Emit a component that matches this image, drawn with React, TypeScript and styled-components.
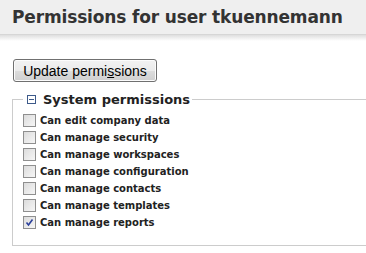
import React from "react";
import styled, { createGlobalStyle } from "styled-components";

const Global = createGlobalStyle`
  html, body { margin: 0; padding: 0; background: #ffffff; overflow: hidden; }
  body { font-family: "DejaVu Sans", Verdana, sans-serif; }
`;

const Page = styled.div`
  width: 366px;
  height: 253px;
  overflow: hidden;
`;

const Header = styled.div`
  height: 34px;
  background: #efefef;
  padding: 0 0 0 12px;
  display: flex;
  align-items: center;
  box-shadow: 0 1px 0 #d6d6d6;
  position: relative;
`;

const Shade = styled.div`
  height: 7px;
  background: linear-gradient(#d9d9d9, #ffffff);
`;

const Title = styled.h1`
  margin: 0;
  font-family: "DejaVu Sans", Verdana, sans-serif;
  font-weight: bold;
  font-size: 17px;
  color: #333333;
  letter-spacing: -0.15px;
`;

const Body = styled.div`
  padding: 18px 0 0 13px;
`;

const Button = styled.button`
  height: 23px;
  width: 144px;
  padding: 0 6px;
  font-family: "Liberation Sans", Arial, sans-serif;
  font-size: 14px;
  color: #000;
  border: 1px solid #707070;
  border-radius: 3px;
  background: linear-gradient(#f2f2f2 0%, #ebebeb 50%, #dddddd 51%, #cfcfcf 100%);
  box-shadow: inset 0 0 0 1px #fcfcfc;
  display: flex;
  align-items: center;
  justify-content: center;
  u { text-decoration: underline; }
`;

const Fieldset = styled.fieldset`
  margin: 10px 0 0 -1px;
  padding: 5px 0 14px 11px;
  border: none;
  border-top: 1px solid #cccccc;
  border-left: 1px solid #cccccc;
  border-bottom: 1px solid #cccccc;
  width: 400px;
`;

const Legend = styled.legend`
  padding: 0 2px 0 4px;
  margin-left: -1px;
  display: flex;
  align-items: center;
  gap: 7px;
  font-family: "DejaVu Sans", Verdana, sans-serif;
  font-weight: bold;
  font-size: 13px;
  color: #222;
`;

const Row = styled.label`
  display: flex;
  align-items: center;
  height: 17px;
  gap: 4px;
  font-family: "DejaVu Sans", Verdana, sans-serif;
  font-weight: bold;
  font-size: 10px;
  color: #222;
`;

const Box = styled.span<{ $checked?: boolean }>`
  width: 11px;
  height: 11px;
  margin-left: -1px;
  border: 1px solid #8f8f8f;
  background: linear-gradient(135deg, #dcdcdc, #f6f6f6);
  display: flex;
  align-items: center;
  justify-content: center;
  flex: none;
`;

const Collapse = () => (
  <svg width="9" height="9" viewBox="0 0 9 9">
    <rect x="0.5" y="0.5" width="8" height="8" fill="#fff" stroke="#3d5a8a" />
    <rect x="2" y="4" width="5" height="1" fill="#3d5a8a" />
  </svg>
);

const Check = () => (
  <svg width="9" height="9" viewBox="0 0 9 9">
    <path d="M1.5 4.5 L3.5 7 L7.5 1.5" fill="none" stroke="#2a3f9a" strokeWidth="1.6" />
  </svg>
);

const items: { label: string; checked?: boolean }[] = [
  { label: "Can edit company data" },
  { label: "Can manage security" },
  { label: "Can manage workspaces" },
  { label: "Can manage configuration" },
  { label: "Can manage contacts" },
  { label: "Can manage templates" },
  { label: "Can manage reports", checked: true },
];

export default function App() {
  return (
    <Page>
      <Global />
      <Header>
        <Title>Permissions for user tkuennemann</Title>
      </Header>
      <Shade />
      <Body>
        <Button>
          Update permi<u>s</u>sions
        </Button>
        <Fieldset>
          <Legend>
            <Collapse />
            System permissions
          </Legend>
          {items.map((it) => (
            <Row key={it.label}>
              <Box $checked={it.checked}>{it.checked && <Check />}</Box>
              {it.label}
            </Row>
          ))}
        </Fieldset>
      </Body>
    </Page>
  );
}
